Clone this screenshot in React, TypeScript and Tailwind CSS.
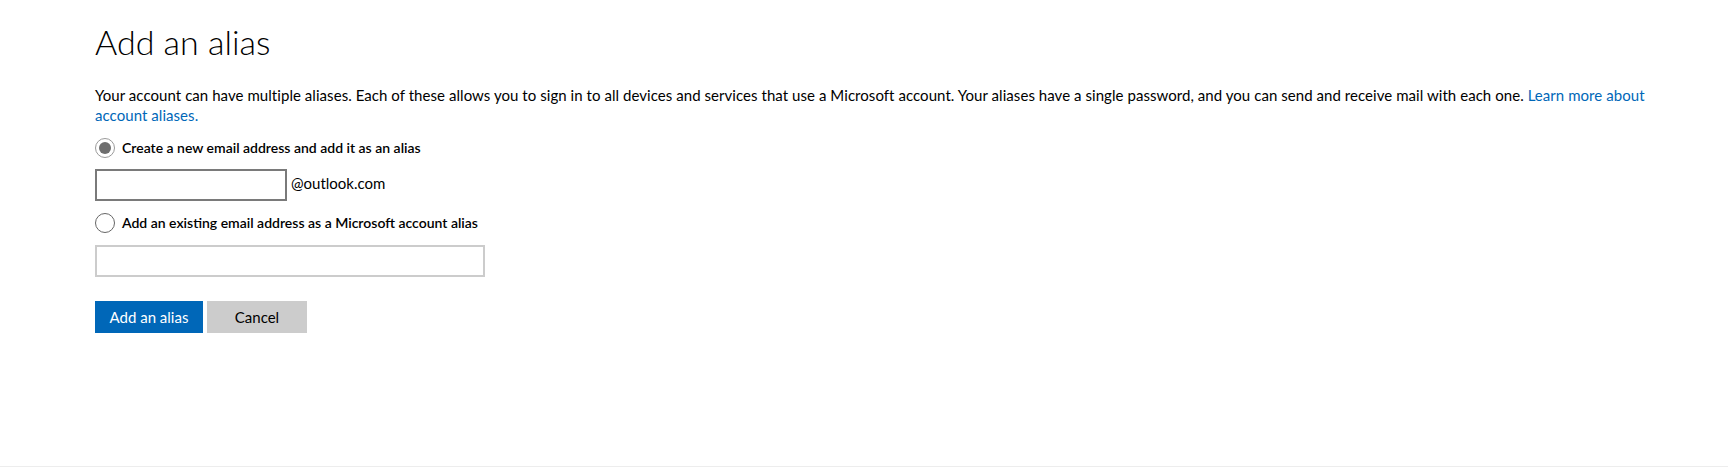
export default function App() {
  return (
    <div className="min-h-[467px] h-[467px] box-border border-b border-[#ededed] bg-white font-['Lato',sans-serif] text-black">
      <div className="pl-[95px] pt-[22px]">
        <h1 className="text-[34px] leading-[40px] font-light">Add an alias</h1>
        <p className="mt-[23px] w-[1580px] text-[15px] leading-[20px] tracking-[0.055px]">
          Your account can have multiple aliases. Each of these allows you to sign in to all devices and services that use a Microsoft account. Your aliases have a single password, and you can send and receive mail with each one.{" "}
          <a href="#" className="text-[#0067b8]">Learn more about account aliases.</a>
        </p>

        <label className="mt-[13px] flex h-5 items-center gap-[7px]">
          <span className="flex h-5 w-5 items-center justify-center rounded-full border border-[#9a9a9a] bg-white">
            <span className="h-[12px] w-[12px] rounded-full bg-[#6e6e6e]" />
          </span>
          <span className="text-[14px] leading-5 font-semibold">Create a new email address and add it as an alias</span>
        </label>

        <div className="mt-[11px] flex h-8 items-center gap-1">
          <input className="box-border h-8 w-[192px] border-2 border-[#7a7a7a] bg-white px-2 text-[15px] outline-none" />
          <span className="mb-[5px] text-[15px] leading-5">@outlook.com</span>
        </div>

        <label className="mt-[12px] flex h-5 items-center gap-[7px]">
          <span className="h-5 w-5 rounded-full border border-[#666666] bg-white" />
          <span className="text-[14px] leading-5 font-semibold">Add an existing email address as a Microsoft account alias</span>
        </label>

        <input className="mt-[12px] box-border block h-8 w-[390px] border-2 border-[#cccccc] bg-white px-2 text-[15px] outline-none" />

        <div className="mt-6 flex gap-1">
          <button className="h-8 w-[108px] bg-[#0067b8] text-[15px] text-white">Add an alias</button>
          <button className="h-8 w-[100px] bg-[#cccccc] text-[15px] text-black">Cancel</button>
        </div>
      </div>
    </div>
  );
}
